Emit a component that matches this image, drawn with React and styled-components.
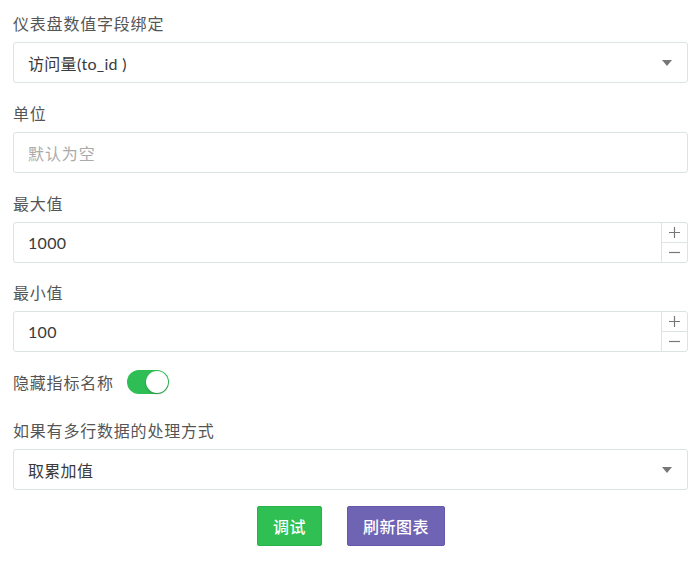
import React from 'react'
import styled, { createGlobalStyle } from 'styled-components'

const GlobalStyle = createGlobalStyle`
  body {
    margin: 0;
    background: #fff;
    font-family: Lato, "Noto Sans CJK SC", sans-serif;
  }
`

const Form = styled.div`
  padding: 13px 12px 0 13px;
  display: flex;
  flex-direction: column;
`

const Field = styled.div`
  display: flex;
  flex-direction: column;
  margin-bottom: ${p => p.gap || 20}px;
`

const Label = styled.div`
  font-size: 16px;
  line-height: 22px;
  letter-spacing: 0.8px;
  color: #555;
  margin-bottom: 7px;
`

const Box = styled.div`
  position: relative;
  height: 41px;
  box-sizing: border-box;
  border: 1px solid #dce3e4;
  border-radius: 3px;
  display: flex;
  align-items: center;
  background: #fff;
`

const Value = styled.div`
  flex: 1;
  padding-left: 14px;
  font-size: 16px;
  letter-spacing: ${p => (p.placeholder ? '0.9px' : '0.3px')};
  color: ${p => (p.placeholder ? '#aaa' : '#3a3a3a')};
`

const Caret = styled.div`
  width: 0;
  height: 0;
  margin-right: 15px;
  border-left: 5px solid transparent;
  border-right: 5px solid transparent;
  border-top: 6px solid #777;
`

const Stepper = styled.div`
  align-self: stretch;
  width: 25px;
  border-left: 1px solid #dce3e4;
  display: flex;
  flex-direction: column;
`

const StepButton = styled.div`
  flex: 1;
  display: flex;
  align-items: center;
  justify-content: center;
  color: #777;
  & + & {
    border-top: 1px solid #dce3e4;
  }
`

const SwitchRow = styled.div`
  display: flex;
  align-items: center;
  gap: 13px;
  margin-top: -2px;
  margin-bottom: 26px;
  font-size: 16px;
  letter-spacing: 0.8px;
  color: #555;
`

const Switch = styled.div`
  width: 42px;
  height: 24px;
  border-radius: 12px;
  background: #2fbd55;
  position: relative;
`

const Knob = styled.div`
  position: absolute;
  top: 1px;
  right: 1px;
  width: 22px;
  height: 22px;
  border-radius: 50%;
  background: #fff;
  box-shadow: 0 1px 2px rgba(0, 0, 0, 0.25);
`

const Actions = styled.div`
  display: flex;
  justify-content: center;
  gap: 25px;
  margin-top: -2px;
  padding-left: 1px;
`

const Button = styled.div`
  height: 40px;
  box-sizing: border-box;
  padding: 0 ${p => p.pad}px;
  display: flex;
  align-items: center;
  border-radius: 2px;
  color: #fff;
  font-size: 16px;
  font-weight: 500;
  letter-spacing: 0.5px;
  background: ${p => p.color};
  border: 1px solid ${p => p.border};
`

const PlusIcon = () => (
  <svg width="11" height="11" viewBox="0 0 11 11">
    <path d="M0 5.5H11M5.5 0V11" stroke="#777" strokeWidth="1.2" />
  </svg>
)

const MinusIcon = () => (
  <svg width="11" height="11" viewBox="0 0 11 11">
    <path d="M0 5.5H11" stroke="#777" strokeWidth="1.2" />
  </svg>
)

const Select = ({ value }) => (
  <Box>
    <Value>{value}</Value>
    <Caret />
  </Box>
)

const NumberInput = ({ value }) => (
  <Box>
    <Value>{value}</Value>
    <Stepper>
      <StepButton><PlusIcon /></StepButton>
      <StepButton><MinusIcon /></StepButton>
    </Stepper>
  </Box>
)

export default function App() {
  return (
    <>
      <GlobalStyle />
      <Form>
        <Field>
          <Label>仪表盘数值字段绑定</Label>
          <Select value="访问量(to_id )" />
        </Field>
        <Field>
          <Label>单位</Label>
          <Box>
            <Value placeholder>默认为空</Value>
          </Box>
        </Field>
        <Field gap={19}>
          <Label>最大值</Label>
          <NumberInput value="1000" />
        </Field>
        <Field>
          <Label>最小值</Label>
          <NumberInput value="100" />
        </Field>
        <SwitchRow>
          隐藏指标名称
          <Switch>
            <Knob />
          </Switch>
        </SwitchRow>
        <Field gap={18}>
          <Label>如果有多行数据的处理方式</Label>
          <Select value="取累加值" />
        </Field>
        <Actions>
          <Button pad={15} color="#2fbf52" border="#28b24a">调试</Button>
          <Button pad={15} color="#6f63b4" border="#6558aa">刷新图表</Button>
        </Actions>
      </Form>
    </>
  )
}
